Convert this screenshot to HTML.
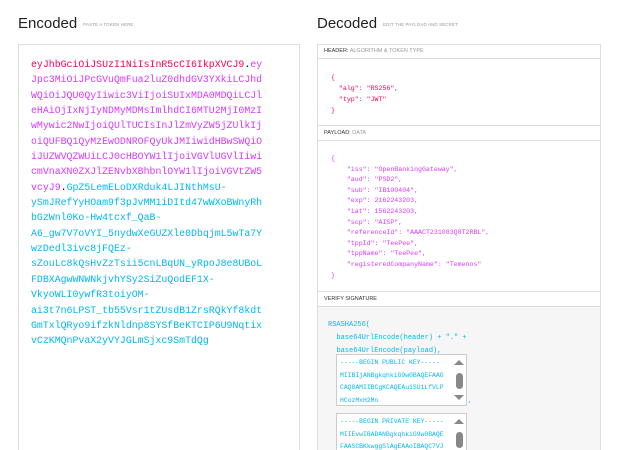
<!DOCTYPE html>
<html style="overflow:hidden;height:450px"><head><style>
body{margin:0;width:624px;height:450px;overflow:hidden;background:#fff;font-family:"Liberation Sans",sans-serif;position:relative}
.t{position:absolute;font-size:15px;color:#222;top:15px}
.t span{font-size:4.5px;color:#999;margin-left:6px;letter-spacing:.1px;vertical-align:middle}
.enc{position:absolute;left:18px;top:44px;width:282px;height:406px;border:1px solid #ddd;border-bottom:none;box-sizing:border-box}
.tok{position:absolute;left:31px;top:57px;font-family:"Liberation Mono",monospace;font-size:9.9px;line-height:15.35px;white-space:pre;letter-spacing:0}
.r{color:#fb015b}.p{color:#d63aff}.b{color:#00b9f1}.k{color:#000}
.dec{position:absolute;left:317px;top:44px;width:284px;height:406px;border:1px solid #ddd;border-bottom:none;overflow:hidden;box-sizing:border-box}
.lab{position:absolute;left:0;width:282px;border-bottom:1px solid #ddd;border-top:1px solid #ddd;font-size:5.5px;color:#333;padding-left:6px;box-sizing:border-box;line-height:14px}
.lab i{font-style:normal;color:#999}
.code{position:absolute;font-family:"Liberation Mono",monospace;font-size:6.6px;white-space:pre}
.ver{position:absolute;left:0;top:262px;width:282px;height:150px;background:#f6f6f6}
.ta{position:absolute;left:18px;width:131px;height:52px;background:#fff;border:1px solid #ccc;box-sizing:border-box;overflow:hidden}
.ta pre{margin:0;padding:2px 3px;font-family:"Liberation Mono",monospace;font-size:6.4px;line-height:12.6px;color:#00b9f1}
.sb{position:absolute;right:3px;top:18px;width:7px;height:16px;border-radius:4px;background:#888}
.up,.dn{position:absolute;right:2px;width:0;height:0;border-left:5px solid transparent;border-right:5px solid transparent}
.up{top:5px;border-bottom:5px solid #888}.dn{bottom:5px;border-top:5px solid #888}
</style></head><body>
<div class="t" style="left:18px">Encoded<span>PASTE A TOKEN HERE</span></div>
<div class="t" style="left:317px">Decoded<span>EDIT THE PAYLOAD AND SECRET</span></div>
<div class="enc"></div>
<div class="tok"><span class="r">eyJhbGciOiJSUzI1NiIsInR5cCI6IkpXVCJ9</span><span class="k">.</span><span class="p">ey
Jpc3MiOiJPcGVuQmFua2luZ0dhdGV3YXkiLCJhd
WQiOiJQU0QyIiwic3ViIjoiSUIxMDA0MDQiLCJl
eHAiOjIxNjIyNDMyMDMsImlhdCI6MTU2MjI0MzI
wMywic2NwIjoiQUlTUCIsInJlZmVyZW5jZUlkIj
oiQUFBQ1QyMzEwODNROFQyUkJMIiwidHBwSWQiO
iJUZWVQZWUiLCJ0cHBOYW1lIjoiVGVlUGVlIiwi
cmVnaXN0ZXJlZENvbXBhbnlOYW1lIjoiVGVtZW5
vcyJ9</span><span class="k">.</span><span class="b">GpZ5LemELoDXRduk4LJINthMsU-
ySmJRefYyHOam9f3pJvMM1iDItd47wWXoBWnyRh
bGzWnl0Ko-Hw4tcxf_QaB-
A6_gw7V7oVYI_5nydwXeGUZXle0DbqjmL5wTa7Y
wzDedl3ivc8jFQEz-
sZouLc8kQsHvZzTsii5cnLBqUN_yRpoJ8e8UBoL
FDBXAgwWNWNkjvhYSy2SiZuQodEF1X-
VkyoWLI0ywfR3toiyOM-
ai3t7n6LPST_tb55Vsr1tZUsdB1ZrsRQkYf8kdt
GmTxlQRyo9ifzkNldnp8SYSfBeKTCIP6U9Nqtix
vCzKMQnPvaX2yVYJGLmSjxc9SmTdQg</span></div>
<div class="dec">
<div class="lab" style="top:-1px;border-top:none"><b style="font-weight:normal">HEADER:</b> <i>ALGORITHM &amp; TOKEN TYPE</i></div>
<div class="code" style="left:13px;top:27px;line-height:11px;color:#fb015b">{
  "alg": "RS256",
  "typ": "JWT"
}</div>
<div class="lab" style="top:80px">PAYLOAD: <i>DATA</i></div>
<div class="code" style="left:13px;top:109px;line-height:10.6px;color:#d63aff">{
    "iss": "OpenBankingGateway",
    "aud": "PSD2",
    "sub": "IB100404",
    "exp": 2162243203,
    "iat": 1562243203,
    "scp": "AISP",
    "referenceId": "AAACT231083Q8T2RBL",
    "tppId": "TeePee",
    "tppName": "TeePee",
    "registeredCompanyName": "Temenos"
}</div>
<div class="ver"></div>
<div class="lab" style="top:246px;background:#fff">VERIFY SIGNATURE</div>
<div class="code" style="left:10px;top:274px;line-height:13px;color:#00b9f1;font-size:7px">RSASHA256(
  base64UrlEncode(header) + "." +
  base64UrlEncode(payload),</div>
<div class="ta" style="top:309px"><pre>-----BEGIN PUBLIC KEY-----
MIIBIjANBgkqhkiG9w0BAQEFAAO
CAQ8AMIIBCgKCAQEAu1SU1LfVLP
HCozMxH2Mo</pre><div class="up"></div><div class="sb"></div><div class="dn"></div></div>
<div class="code" style="left:150px;top:352px;color:#00b9f1">,</div>
<div class="ta" style="top:368px;height:38px;border-bottom:none"><pre>-----BEGIN PRIVATE KEY-----
MIIEvwIBADANBgkqhkiG9w0BAQE
FAASCBKkwggSlAgEAAoIBAQC7VJ</pre><div class="up"></div><div class="sb"></div></div>
</div>
</body></html>
